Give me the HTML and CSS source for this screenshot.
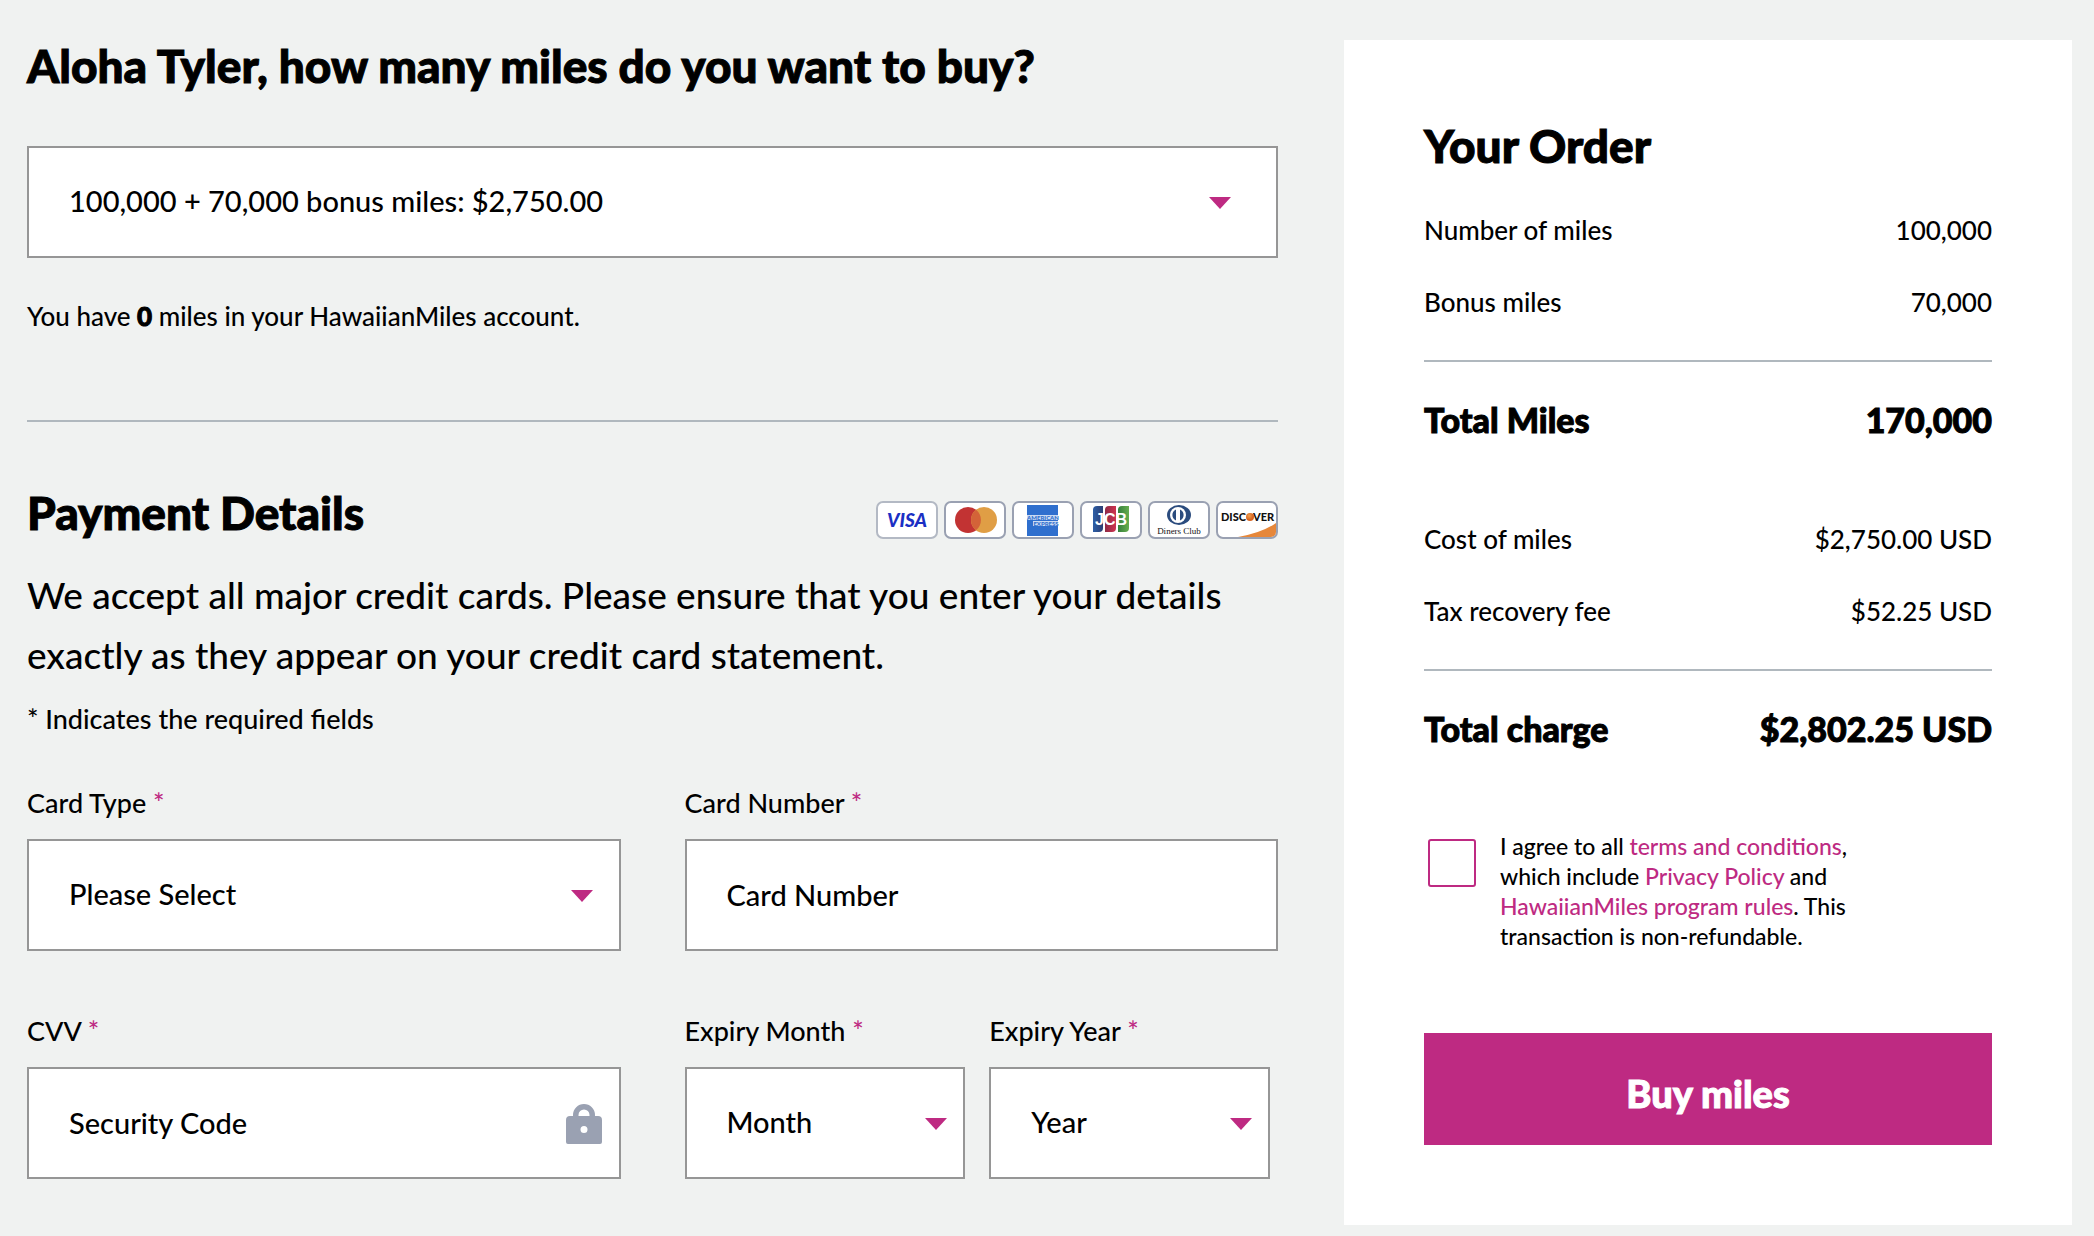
FILE: index.html
```html
<!DOCTYPE html>
<html lang="en">
<head>
    <meta charset="utf-8">
    <title>Buy Miles</title>
    <link rel="stylesheet" href="styles.css">
</head>

<body>
    <form class="page">
        <main class="details">
            <h1><label for="miles">Aloha Tyler, how many miles do you want to buy?</label></h1>
            <div class="select-box select-wide">
                <select id="miles">
                    <option>100,000 + 70,000 bonus miles: $2,750.00</option>
                </select>
            </div>
            <p class="balance">You have <strong>0</strong> miles in your HawaiianMiles account.</p>
            <hr>

            <div class="payment-header">
                <h2>Payment Details</h2>
                <div class="cards">
                    <svg class="card card-visa" viewBox="0 0 62 38" role="img" aria-label="Visa">
                        <rect class="card-frame" x="1" y="1" width="60" height="36" rx="6"/>
                        <text x="31" y="26" font-size="19" font-style="italic" fill="#1a2fc4" text-anchor="middle">VISA</text>
                    </svg>
                    <svg class="card" viewBox="0 0 62 38" role="img" aria-label="Mastercard">
                        <rect class="card-frame" x="1" y="1" width="60" height="36" rx="6"/>
                        <circle cx="24" cy="19" r="13" fill="#c23333"/>
                        <circle cx="40" cy="19" r="13" fill="#e09e45"/>
                        <path d="M32 8.800a13 13 0 0 1 0 20.400a13 13 0 0 1 0-20.400z" fill="#d36338"/>
                    </svg>
                    <svg class="card" viewBox="0 0 62 38" role="img" aria-label="American Express">
                        <rect class="card-frame" x="1" y="1" width="60" height="36" rx="6"/>
                        <rect x="15" y="4" width="31" height="31" fill="#2f6fce"/>
                        <rect x="15" y="14" width="31" height="5" fill="#fff" opacity=".75"/>
                        <rect x="21" y="20" width="25" height="5" fill="#fff" opacity=".75"/>
                        <text x="31" y="19" font-size="6" fill="#2f6fce" text-anchor="middle">AMERICAN</text>
                        <text x="34" y="25" font-size="6" fill="#2f6fce" text-anchor="middle">EXPRESS</text>
                    </svg>
                    <svg class="card" viewBox="0 0 62 38" role="img" aria-label="JCB">
                        <defs>
                            <linearGradient id="jcbBlue"><stop offset="0" stop-color="#2c5ea6"/><stop offset="1" stop-color="#2c3f74"/></linearGradient>
                            <linearGradient id="jcbRed"><stop offset="0" stop-color="#8e2a45"/><stop offset="1" stop-color="#cf3350"/></linearGradient>
                            <linearGradient id="jcbGreen"><stop offset="0" stop-color="#357f3d"/><stop offset="1" stop-color="#66ae4e"/></linearGradient>
                        </defs>
                        <rect class="card-frame" x="1" y="1" width="60" height="36" rx="6"/>
                        <path d="M17 5h6v22a4 4 0 0 1-4 4h-6V9a4 4 0 0 1 4-4z" fill="url(#jcbBlue)"/>
                        <path d="M29 5h7v22a4 4 0 0 1-4 4h-7V9a4 4 0 0 1 4-4z" fill="url(#jcbRed)"/>
                        <path d="M42 5h7v22a4 4 0 0 1-4 4h-7V9a4 4 0 0 1 4-4z" fill="url(#jcbGreen)"/>
                        <text class="jcb" x="31" y="24" font-size="16" fill="#fff" text-anchor="middle">JCB</text>
                    </svg>
                    <svg class="card" viewBox="0 0 62 38" role="img" aria-label="Diners Club">
                        <rect class="card-frame" x="1" y="1" width="60" height="36" rx="6"/>
                        <ellipse cx="31" cy="14" rx="12" ry="10" fill="#2b4c7e"/>
                        <circle cx="30" cy="14" r="8" fill="#fff"/>
                        <path d="M28 8.500a6 6 0 0 0 0 11zM32 8.500a6 6 0 0 1 0 11z" fill="#2b4c7e"/>
                        <text class="serif" x="31" y="33" font-size="9" fill="#111" text-anchor="middle">Diners Club</text>
                    </svg>
                    <svg class="card" viewBox="0 0 62 38" role="img" aria-label="Discover">
                        <defs>
                            <radialGradient id="discoverDot" cx=".4" cy=".35"><stop offset="0" stop-color="#f0a050"/><stop offset="1" stop-color="#d86420"/></radialGradient>
                        </defs>
                        <rect class="card-frame" x="1" y="1" width="60" height="36" rx="6"/>
                        <path d="M22 36q24-4 38-14v9a5 5 0 0 1-5 5z" fill="#e6873a"/>
                        <text x="30" y="20" font-size="11" fill="#111" text-anchor="end">DISC</text>
                        <circle cx="34" cy="16" r="4" fill="url(#discoverDot)"/>
                        <text x="37" y="20" font-size="11" fill="#111">VER</text>
                    </svg>
                </div>
            </div>
            <p class="intro">We accept all major credit cards. Please ensure that you enter your details exactly as they appear on your credit card statement.</p>
            <p class="required-note">* Indicates the required fields</p>

            <div class="fields">
                <div class="field">
                    <label for="cardType">Card Type <span class="star">*</span></label>
                    <div class="select-box">
                        <select id="cardType">
                            <option>Please Select</option>
                        </select>
                    </div>
                </div>
                <div class="field">
                    <label for="cardNumber">Card Number <span class="star">*</span></label>
                    <input type="text" id="cardNumber" placeholder="Card Number">
                </div>
                <div class="field">
                    <label for="cvv">CVV <span class="star">*</span></label>
                    <div class="cvv-box">
                        <input type="text" id="cvv" placeholder="Security Code">
                        <svg class="lock" viewBox="0 0 36 40" aria-hidden="true">
                            <path d="M7 12v-1a11 11 0 0 1 22 0v1h3a4 4 0 0 1 4 4v22a2 2 0 0 1-2 2H2a2 2 0 0 1-2-2V16a4 4 0 0 1 4-4zM12.500 12h11v-1a5.500 5.500 0 0 0-11 0zM18 22a3.500 3.500 0 1 0 0 7a3.500 3.500 0 0 0 0-7z" fill="#9aa1b2" fill-rule="evenodd"/>
                        </svg>
                    </div>
                </div>
                <div class="expiry">
                    <div class="field">
                        <label for="month">Expiry Month <span class="star">*</span></label>
                        <div class="select-box">
                            <select id="month">
                                <option>Month</option>
                            </select>
                        </div>
                    </div>
                    <div class="field">
                        <label for="year">Expiry Year <span class="star">*</span></label>
                        <div class="select-box">
                            <select id="year">
                                <option>Year</option>
                            </select>
                        </div>
                    </div>
                </div>
            </div>
        </main>

        <aside class="order">
            <h2>Your Order</h2>
            <table>
                <tr>
                    <td>Number of miles</td>
                    <td>100,000</td>
                </tr>
                <tr>
                    <td>Bonus miles</td>
                    <td>70,000</td>
                </tr>
                <tr class="total">
                    <th>Total Miles</th>
                    <td>170,000</td>
                </tr>
            </table>
            <table>
                <tr>
                    <td>Cost of miles</td>
                    <td>$2,750.00 USD</td>
                </tr>
                <tr>
                    <td>Tax recovery fee</td>
                    <td>$52.25 USD</td>
                </tr>
                <tr class="total">
                    <th>Total charge</th>
                    <td>$2,802.25 USD</td>
                </tr>
            </table>
            <div class="agree">
                <input type="checkbox" id="agree">
                <label for="agree">I agree to all <a href="#">terms and conditions</a>, which include <a href="#">Privacy Policy</a> and <a href="#">HawaiianMiles program rules</a>. This transaction is non-refundable.</label>
            </div>
            <button type="submit">Buy miles</button>
        </aside>
    </form>
</body>
</html>
```
FILE: styles.css
```css
* {
    box-sizing: border-box;
}

body {
    margin: 0;
    background-color: #f0f2f1;
    color: #000;
    font-family: Lato, sans-serif;
    font-size: 26px;
    font-weight: 500;
    line-height: 40px;
}

.page {
    display: grid;
    grid-template-columns: 1251fr 728fr;
    gap: 66px;
    align-items: start;
    padding: 40px 22px 12px 27px;
}

h1, h2 {
    margin: 0;
    font-size: 46px;
    font-weight: 900;
    line-height: 52px;
}

/* Extra heavy weight for headings and totals */
h1, h2, .total, .balance strong, button {
    -webkit-text-stroke: 1px currentColor;
}

p {
    margin: 0;
}

hr {
    height: 2px;
    margin: 0;
    border: none;
    background-color: #b0b8be;
}

/* Form controls */
select, input[type="text"] {
    display: block;
    width: 100%;
    height: 112px;
    padding: 0 40px 2px;
    border: 2px solid #969696;
    border-radius: 0;
    background-color: #fff;
    color: #000;
    font: inherit;
    font-size: 29px;
    appearance: none;
}

input::placeholder {
    color: #000;
    opacity: 1;
}

.select-box, .cvv-box {
    position: relative;
}

/* Drop-down arrow */
.select-box::after {
    content: "";
    position: absolute;
    top: 51px;
    right: 28px;
    border: 11px solid transparent;
    border-top: 12px solid #be2a82;
    border-bottom: none;
    pointer-events: none;
}

.select-wide::after {
    right: 47px;
}

.expiry .select-box::after {
    right: 18px;
}

.select-wide {
    margin-top: 54px;
}

.lock {
    position: absolute;
    top: 37px;
    right: 19px;
    width: 36px;
    height: 40px;
}

.balance {
    margin: 38px 0 84px;
}

.balance strong {
    font-weight: 900;
}

/* Payment */
.payment-header {
    display: flex;
    justify-content: space-between;
    align-items: flex-end;
    margin: 65px 0 26px;
}

.cards {
    display: flex;
    gap: 6px;
}

.card {
    width: 62px;
    height: 38px;
    font-weight: 900;
}

.card-frame {
    fill: #fff;
    stroke: #9aa1b2;
    stroke-width: 2;
}

.card-visa .card-frame {
    stroke: #b3b9c4;
}

.jcb {
    font-family: "Liberation Sans", sans-serif;
}

.serif {
    font-family: "Liberation Serif", serif;
    font-weight: 400;
}

.intro {
    font-size: 37px;
    line-height: 60px;
}

.required-note {
    margin: 14px 0 44px;
    font-size: 27px;
}

.fields {
    display: grid;
    grid-template-columns: 1fr 1fr;
    gap: 60px 64px;
}

.field label {
    display: block;
    margin-bottom: 16px;
    font-size: 27px;
}

.star {
    color: #be2a82;
}

.expiry {
    display: grid;
    grid-template-columns: 1fr 1fr;
    gap: 24px;
    padding-right: 8px;
}

/* Order summary */
.order {
    padding: 80px;
    background-color: #fff;
}

.order table {
    width: 100%;
    margin-bottom: 26px;
    border-collapse: collapse;
}

.order table + table {
    margin-bottom: 45px;
}

.order h2 {
    margin-bottom: 22px;
}

.order td, .order th {
    height: 72px;
    padding: 0;
    text-align: left;
}

.order td:last-child {
    text-align: right;
}

.order tr:nth-child(2) td {
    height: 95px;
    padding-bottom: 22px;
}

.order .total th, .order .total td {
    height: 116px;
    border-top: 2px solid #b0b8be;
    font-size: 34px;
    font-weight: 900;
}

.agree {
    display: flex;
    gap: 24px;
    align-items: flex-start;
    padding-left: 4px;
}

.agree input {
    flex: none;
    width: 48px;
    height: 48px;
    margin: 8px 0 0;
    border: 2px solid #be2a82;
    border-radius: 3px;
    background-color: #fff;
    appearance: none;
}

.agree input:checked {
    background-color: #be2a82;
}

.agree label {
    max-width: 366px;
    font-size: 23px;
    line-height: 30px;
}

.agree a {
    color: #be2a82;
    text-decoration: none;
}

button {
    width: 100%;
    height: 112px;
    margin-top: 82px;
    padding: 8px 0 0;
    border: none;
    background-color: #be2a82;
    color: #fff;
    font: inherit;
    font-size: 38px;
    font-weight: 900;
    cursor: pointer;
}
```
